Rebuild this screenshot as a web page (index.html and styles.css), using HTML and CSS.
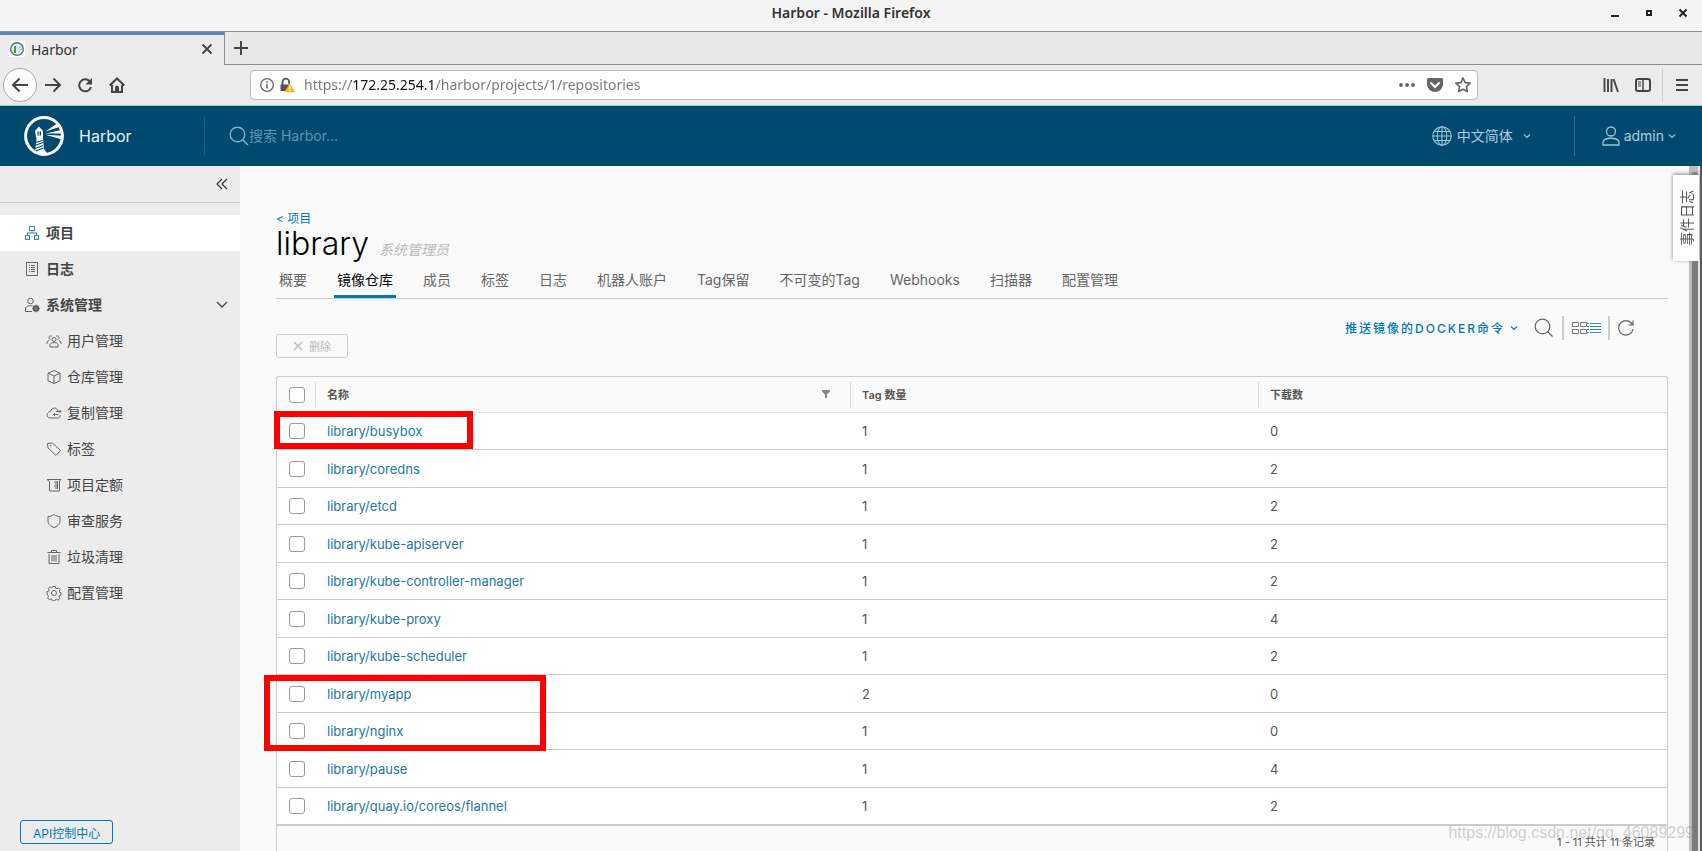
FILE: index.html
```html
<!DOCTYPE html>
<html lang="zh-CN">
<head>
<meta charset="utf-8">
<title>Harbor</title>
<link rel="stylesheet" href="styles.css">
</head>
<body>
<div class="titlebar">
  <span class="window-title">Harbor - Mozilla Firefox</span>
  <div class="window-buttons">
    <button aria-label="最小化"><svg width="10" height="10" viewBox="0 0 10 10"><path d="M1 8h8" stroke="#222" stroke-width="2"/></svg></button>
    <button aria-label="最大化"><svg width="10" height="10" viewBox="0 0 10 10"><path d="M3 3h4v4H3z" fill="none" stroke="#222" stroke-width="2"/></svg></button>
    <button aria-label="关闭"><svg width="10" height="10" viewBox="0 0 10 10"><path d="M1.5 1.5l7 7M8.500 1.500l-7 7" stroke="#222" stroke-width="2"/></svg></button>
  </div>
</div>
<div class="tabstrip">
  <div class="browser-tab">
    <svg class="favicon" width="16" height="16" viewBox="0 0 16 16"><path fill="#fff" d="M0 0h16v16H0z"/><circle cx="8" cy="8" r="6.300" fill="#eef6f8" stroke="#5d6d75" stroke-width="1.400"/><path d="M8 8l5-4v2zM8.500 8.500l5-1v1.500z" fill="#7fb9d3"/><path d="M5 5h2v7H5z" fill="#57924a"/><path d="M8 10h4l-3 2z" fill="#b9d9a9"/></svg>
    <span class="browser-tab-title">Harbor</span>
    <button aria-label="关闭标签页"><svg width="12" height="12" viewBox="0 0 12 12"><path d="M1.500 1.500l9 9M10.500 1.500l-9 9" stroke="#444" stroke-width="1.800"/></svg></button>
  </div>
  <button class="new-tab" aria-label="新建标签页"><svg width="16" height="16" viewBox="0 0 16 16"><path d="M8 1v14M1 8h14" stroke="#444" stroke-width="2"/></svg></button>
</div>
<div class="toolbar">
  <button class="back" aria-label="后退"><svg width="18" height="16" viewBox="0 0 18 16"><path d="M17 8H2M8.500 1.500L2 8l6.500 6.500" fill="none" stroke="#444" stroke-width="2"/></svg></button>
  <button class="tool" aria-label="前进"><svg width="18" height="16" viewBox="0 0 18 16"><path d="M1 8h15M9.500 1.500L16 8l-6.500 6.500" fill="none" stroke="#444" stroke-width="2"/></svg></button>
  <button class="tool" aria-label="刷新"><svg width="16" height="16" viewBox="0 0 16 16"><path d="M12.600 4.200A6 6 0 1 0 14 10" fill="none" stroke="#444" stroke-width="2"/><path d="M15 1v6.500H8.500z" fill="#444"/></svg></button>
  <button class="tool" aria-label="主页"><svg width="16" height="16" viewBox="0 0 16 16"><path d="M.7 8.500L8 1.500l7.300 7" fill="none" stroke="#444" stroke-width="2"/><path d="M3 8v7h10V8" fill="none" stroke="#444" stroke-width="2"/><path d="M6 15v-4.500c0-2.500 4-2.500 4 0V15z" fill="#444"/></svg></button>
  <div class="urlbar">
    <svg width="14" height="14" viewBox="0 0 14 14"><circle cx="7" cy="7" r="6.300" fill="none" stroke="#666" stroke-width="1.300"/><path d="M7 6v4.500M7 3.200v1.600" stroke="#666" stroke-width="1.600"/></svg>
    <svg width="15" height="16" viewBox="0 0 15 16"><path d="M2.500 8V5a3.300 3.300 0 0 1 6.600 0v2" fill="none" stroke="#555" stroke-width="1.800"/><path d="M.5 7.500h9V14h-9z" fill="#555"/><path d="M9.700 6L15 15.300H4.400z" fill="#f5b31d"/><path d="M9.700 9v3M9.700 12.800V14" stroke="#fff" stroke-width="1.400"/></svg>
    <input class="url" type="text" aria-label="地址" value="https://172.25.254.1/harbor/projects/1/repositories">
    <svg width="16" height="16" viewBox="0 0 16 16" fill="#666"><circle cx="2" cy="8" r="1.900"/><circle cx="8" cy="8" r="1.900"/><circle cx="14" cy="8" r="1.900"/></svg>
    <svg width="16" height="16" viewBox="0 0 16 16"><path d="M1.500 1h13c1 0 1.500.6 1.500 1.500V7a8 8 0 0 1-16 0V2.500C0 1.600.6 1 1.500 1z" fill="#666"/><path d="M4 6l4 4 4-4" fill="none" stroke="#fff" stroke-width="2" stroke-linecap="round"/></svg>
    <svg width="16" height="16" viewBox="0 0 16 16"><path d="M8 1l2.100 4.600 5 .6-3.700 3.400 1 5L8 12.200l-4.400 2.400 1-5L.9 6.200l5-.6z" fill="none" stroke="#666" stroke-width="1.700" stroke-linejoin="round"/></svg>
  </div>
  <div class="toolbar-end">
    <button aria-label="书库"><svg width="16" height="16" viewBox="0 0 16 16"><path d="M1.500 1v14M5 2v13M8.500 2v13M10.500 2L15 15" stroke="#444" stroke-width="1.900"/></svg></button>
    <button aria-label="侧栏"><svg width="16" height="16" viewBox="0 0 16 16"><rect x="1" y="2" width="14" height="12" rx="2" fill="none" stroke="#444" stroke-width="2"/><path d="M8 2v12" stroke="#444" stroke-width="1.500"/><path d="M3 5h3M3 7h3M3 9h3" stroke="#444"/></svg></button>
    <button class="menu" aria-label="菜单"><svg width="12" height="16" viewBox="0 0 12 16"><path d="M0 3h12M0 8h12M0 13h12" stroke="#444" stroke-width="1.900"/></svg></button>
  </div>
</div>
<header class="header">
  <a class="brand" href="#">
    <svg width="40" height="40" viewBox="0 0 40 40"><circle cx="20" cy="20" r="18.400" fill="none" stroke="#fff" stroke-width="3"/><path d="M11 15l4-4.500 4 4.500v8l1 10 3 4-6 1-6-3 1.500-12z" fill="#fff"/><path d="M13.500 15.500h3.500v4h-3.500z" fill="#004a70"/><path d="M15.200 15.500v4" stroke="#fff"/><path d="M11.500 26.500l7-2M11 29.500l8-3M11 32.500l8-3M11.500 35l8-3" stroke="#004a70" stroke-width="1.100"/><path d="M21.500 15.500L33 7.500l3 3.300zM21.500 17.500l15.500-3.500 1 3.500zM21.500 18.800l16.500 1-1 3.500z" fill="#fff"/></svg>
    <span>Harbor</span>
  </a>
  <label class="search">
    <svg width="20" height="20" viewBox="0 0 20 20"><circle cx="8.500" cy="8.500" r="7.300" fill="none" stroke="#7fb0cb" stroke-width="1.400"/><path d="M13.500 13.500l5.500 5.500" stroke="#7fb0cb" stroke-width="1.500"/></svg>
    <input type="text" placeholder="搜索 Harbor..." aria-label="搜索 Harbor">
  </label>
  <button class="language">
    <svg width="20" height="20" viewBox="0 0 20 20" fill="none" stroke="#9dc4d9" stroke-width="1.100"><circle cx="10" cy="10" r="9.200"/><ellipse cx="10" cy="10" rx="4.800" ry="9.200"/><path d="M10 1v18M1 10h18M2.500 5.500h15M2.500 14.500h15"/></svg>
    <span>中文简体</span>
    <svg class="caret" width="8" height="8" viewBox="0 0 8 8"><path d="M1 2.500l3 3 3-3" fill="none" stroke="#9dc4d9" stroke-width="1.200"/></svg>
  </button>
  <button class="user">
    <svg width="18" height="20" viewBox="0 0 18 20" fill="none" stroke="#9dc4d9" stroke-width="1.300"><circle cx="9" cy="5.500" r="4.500"/><path d="M1 19v-3c1.500-5 14.500-5 16 0v3z"/></svg>
    <span>admin</span>
    <svg width="8" height="8" viewBox="0 0 8 8"><path d="M1 2.500l3 3 3-3" fill="none" stroke="#9dc4d9" stroke-width="1.200"/></svg>
  </button>
</header>
<div class="workspace">
  <aside class="sidebar">
    <div class="collapse"><button aria-label="收起"><svg width="12" height="12" viewBox="0 0 12 12"><path d="M6 1L1 6l5 5M11 1L6 6l5 5" fill="none" stroke="#333" stroke-width="1.200"/></svg></button></div>
    <nav class="nav">
      <a class="nav-item active" href="#"><svg width="16" height="16" viewBox="0 0 16 16" fill="none" stroke="#3585ad" stroke-width="1.100"><path d="M5.500 1.500h5v4h-5zM1.500 10.500h4v4h-4zM10.500 10.500h4v4h-4zM8 5.500V8M3.500 10V8h9v2"/></svg><span>项目</span></a>
      <a class="nav-item" href="#"><svg width="16" height="16" viewBox="0 0 16 16" fill="none" stroke="#666"><path d="M2.500 1.500h11v13h-11zM5 4.500h1M7 4.500h4M5 6.500h1M7 6.500h4M5 8.500h1M7 8.500h4M5 10.500h1M7 10.500h4"/></svg><span>日志</span></a>
      <a class="nav-item" href="#"><svg width="16" height="16" viewBox="0 0 16 16" fill="none" stroke="#666"><circle cx="6.500" cy="4" r="2.800"/><path d="M8 14.500H1.500V11c1-2 4-3 7-2"/><circle cx="12" cy="11.500" r="2.300" stroke="#555" stroke-width="2"/><path d="M12 7.500v8M8 11.500h8M9.300 8.800l5.400 5.400M14.700 8.800l-5.400 5.400" stroke-width=".8"/></svg><span>系统管理</span><svg class="chevron" width="12" height="12" viewBox="0 0 12 12"><path d="M1 3l5 5 5-5" fill="none" stroke="#444" stroke-width="1.300"/></svg></a>
      <a class="nav-item child" href="#"><svg width="16" height="16" viewBox="0 0 16 16" fill="none" stroke="#666"><circle cx="8" cy="6.500" r="2"/><path d="M4 14v-2.500c1-2.500 7-2.500 8 0V14zM4.500 6.500A1.800 1.800 0 1 1 6 3.500M11.500 6.500A1.800 1.800 0 1 0 10 3.500M1 11V9l2-1.500M15 11V9l-2-1.500"/></svg><span>用户管理</span></a>
      <a class="nav-item child" href="#"><svg width="16" height="16" viewBox="0 0 16 16" fill="none" stroke="#666"><path d="M8 1.500l6 2.700v7.600l-6 2.700-6-2.700V4.200zM2 4.200L8 7l6-2.800M8 7v7.500"/></svg><span>仓库管理</span></a>
      <a class="nav-item child" href="#"><svg width="16" height="16" viewBox="0 0 16 16" fill="none" stroke="#666"><path d="M12 6C11 2 5.500 2 4.800 6.500 0 7 .2 13 4 13h7.500c2 0 3-1.500 2.500-3M10 6.500h5M13.500 5L15 6.500 13.500 8M12.500 9.500h-5M9 8L7.500 9.500 9 11"/></svg><span>复制管理</span></a>
      <a class="nav-item child" href="#"><svg width="16" height="16" viewBox="0 0 16 16" fill="none" stroke="#666"><path d="M1.500 2.500l5-.5 8 7.500-4.500 5-8-7.500zM4.500 4.500h.6v.6h-.6z"/></svg><span>标签</span></a>
      <a class="nav-item child" href="#"><svg width="16" height="16" viewBox="0 0 16 16" fill="none" stroke="#666"><path d="M1 2.500h14L13.500 4v10h-10V4.500zM8 5h3M9 7h2M8 9h3M9 11h2M11.500 4v8"/></svg><span>项目定额</span></a>
      <a class="nav-item child" href="#"><svg width="16" height="16" viewBox="0 0 16 16" fill="none" stroke="#666"><path d="M8 1.500c2 1.500 4 2 6 2V8c0 3.500-3 5.500-6 6.500C5 13.500 2 11.500 2 8V3.500c2 0 4-.5 6-2z"/></svg><span>审查服务</span></a>
      <a class="nav-item child" href="#"><svg width="16" height="16" viewBox="0 0 16 16" fill="none" stroke="#666"><path d="M1.500 3.500h13M5.500 3.500v-2h5v2M3 5v9.500h10V5M6 6v6.500M8 6v6.500M10 6v6.500"/></svg><span>垃圾清理</span></a>
      <a class="nav-item child" href="#"><svg width="16" height="16" viewBox="0 0 16 16" fill="none" stroke="#666"><path d="M6.700 1.500h2.600l.4 1.700 1.300.5 1.500-.9 1.700 1.800-.9 1.500.5 1.300 1.200.3v2.600l-1.500.4-.6 1.300.9 1.500-1.800 1.700-1.500-.9-1.300.5-.3 1.200H6.500l-.4-1.500-1.300-.6-1.500.9-1.700-1.800.9-1.500-.5-1.300L1 9.300V6.700l1.500-.4.6-1.300-.9-1.500L4 1.800l1.500.9 1-.4z"/><circle cx="8" cy="8" r="2.500"/></svg><span>配置管理</span></a>
    </nav>
    <button class="api">API控制中心</button>
  </aside>
  <main class="main">
    <a class="back-link" href="#">&lt; 项目</a>
    <div class="heading"><h1>library</h1><em>系统管理员</em></div>
    <nav class="tabs">
      <a href="#">概要</a><a class="selected" href="#">镜像仓库</a><a href="#">成员</a><a href="#">标签</a><a href="#">日志</a><a href="#">机器人账户</a><a href="#">Tag保留</a><a href="#">不可变的Tag</a><a href="#">Webhooks</a><a href="#">扫描器</a><a href="#">配置管理</a>
    </nav>
    <div class="actions">
      <button class="docker">推送镜像的DOCKER命令<svg width="8" height="8" viewBox="0 0 8 8"><path d="M1 2.500l3 3 3-3" fill="none" stroke="#0079b8" stroke-width="1.200"/></svg></button>
      <button aria-label="搜索"><svg width="20" height="20" viewBox="0 0 20 20"><circle cx="8.500" cy="8.500" r="7.300" fill="none" stroke="#666" stroke-width="1.200"/><path d="M13.500 13.500l5 5" stroke="#666" stroke-width="1.300"/></svg></button>
      <div class="views">
        <button aria-label="卡片"><svg width="16" height="12" viewBox="0 0 16 12"><path d="M1.500.5h6v4h-6zM9.500.5h6v4h-6zM1.500 7.500h6v4h-6zM9.500 7.500h6v4h-6z" fill="none" stroke="#777"/></svg></button>
        <button aria-label="列表"><svg width="14" height="12" viewBox="0 0 14 12"><path d="M0 1.500h2M3 1.500h11M0 4.500h2M3 4.500h11M0 7.500h2M3 7.500h11M0 10.500h2M3 10.500h11" stroke="#2f8fc4"/></svg></button>
      </div>
      <button aria-label="刷新"><svg width="16" height="16" viewBox="0 0 16 16"><path d="M14.500 5A7.200 7.200 0 1 0 15 9M15 .5V5h-4.500" fill="none" stroke="#666" stroke-width="1.200"/></svg></button>
    </div>
    <button class="delete" disabled><svg width="10" height="10" viewBox="0 0 10 10"><path d="M1 1l8 8M9 1L1 9" stroke="#bbb" stroke-width="1.300"/></svg>删除</button>
    <div class="grid">
      <table>
        <colgroup><col class="col-check"><col class="col-name"><col class="col-tags"><col></colgroup>
        <thead><tr>
          <th><input type="checkbox" aria-label="全选"></th>
          <th><div class="th">名称<button aria-label="筛选"><svg width="8" height="8" viewBox="0 0 8 8"><path d="M0 0h8v1.500L5 4.500V8H3V4.500L0 1.500z" fill="#888"/></svg></button></div></th>
          <th><div class="th">Tag 数量</div></th>
          <th><div class="th">下载数</div></th>
        </tr></thead>
        <tbody>
          <tr><td><input type="checkbox" aria-label="library/busybox"></td><td><a href="#">library/busybox</a></td><td>1</td><td>0</td></tr>
          <tr><td><input type="checkbox" aria-label="library/coredns"></td><td><a href="#">library/coredns</a></td><td>1</td><td>2</td></tr>
          <tr><td><input type="checkbox" aria-label="library/etcd"></td><td><a href="#">library/etcd</a></td><td>1</td><td>2</td></tr>
          <tr><td><input type="checkbox" aria-label="library/kube-apiserver"></td><td><a href="#">library/kube-apiserver</a></td><td>1</td><td>2</td></tr>
          <tr><td><input type="checkbox" aria-label="library/kube-controller-manager"></td><td><a href="#">library/kube-controller-manager</a></td><td>1</td><td>2</td></tr>
          <tr><td><input type="checkbox" aria-label="library/kube-proxy"></td><td><a href="#">library/kube-proxy</a></td><td>1</td><td>4</td></tr>
          <tr><td><input type="checkbox" aria-label="library/kube-scheduler"></td><td><a href="#">library/kube-scheduler</a></td><td>1</td><td>2</td></tr>
          <tr><td><input type="checkbox" aria-label="library/myapp"></td><td><a href="#">library/myapp</a></td><td>2</td><td>0</td></tr>
          <tr><td><input type="checkbox" aria-label="library/nginx"></td><td><a href="#">library/nginx</a></td><td>1</td><td>0</td></tr>
          <tr><td><input type="checkbox" aria-label="library/pause"></td><td><a href="#">library/pause</a></td><td>1</td><td>4</td></tr>
          <tr><td><input type="checkbox" aria-label="library/quay.io/coreos/flannel"></td><td><a href="#">library/quay.io/coreos/flannel</a></td><td>1</td><td>2</td></tr>
        </tbody>
      </table>
      <div class="grid-footer">1 - 11 共计 11 条记录</div>
      <div class="mark mark-one"></div>
      <div class="mark mark-two"></div>
    </div>
  </main>
  <div class="scrollbar"><div class="thumb"></div></div>
  <button class="events">事件日志</button>
</div>
<div class="watermark">https://blog.csdn.net/qq_46089299</div>
</body>
</html>
```
FILE: styles.css
```css
* { box-sizing: border-box; }
body {
  margin: 0;
  height: 100vh;
  display: flex;
  flex-direction: column;
  position: relative;
  overflow: hidden;
  font-family: Inter, "Noto Sans CJK SC", sans-serif;
  font-size: 14px;
  color: #565656;
  background: #fafafa;
}
button {
  display: flex;
  align-items: center;
  justify-content: center;
  padding: 0;
  border: 0;
  background: none;
  font: inherit;
  color: inherit;
}
a { text-decoration: none; color: inherit; }
svg { flex: none; display: block; }

.titlebar {
  flex: none;
  display: grid;
  grid-template-columns: 1fr auto 1fr;
  height: 32px;
  padding: 0 14px 6px;
  align-items: center;
  background: #f4f4f4;
  border-bottom: 1px solid #8f8f8f;
  font-family: "Noto Sans", sans-serif;
}
.window-title { grid-column: 2; font-weight: 600; font-size: 14px; color: #333; }
.window-buttons { display: flex; justify-content: flex-end; gap: 24px; }

.tabstrip { flex: none; display: flex; height: 33px; background: #e8e8e8; font-family: "Noto Sans", sans-serif; }
.browser-tab {
  display: flex;
  align-items: center;
  gap: 6px;
  width: 225px;
  padding: 0 11px 2px 9px;
  border-top: 3px solid #5a87b8;
  border-right: 1px solid #8f8f8f;
  background: #ebebeb;
}
.browser-tab-title { flex: 1; color: #333; }
.new-tab { flex: 1; justify-content: flex-start; padding-left: 8px; border-bottom: 1px solid #8f8f8f; }

.toolbar {
  flex: none;
  display: flex;
  align-items: center;
  height: 41px;
  padding: 0 14px 0 3px;
  background: #ebebeb;
  border-bottom: 1px solid #b8c4cc;
}
.back { width: 34px; height: 34px; border: 1px solid #aaa; border-radius: 50%; background: #fbfbfb; }
.tool { width: 32px; height: 32px; }
.urlbar {
  flex: 1;
  display: flex;
  align-items: center;
  gap: 12px;
  height: 30px;
  margin: 0 125px 0 117px;
  padding: 0 6px 0 9px;
  border: 1px solid #b9b9b9;
  border-radius: 4px;
  background: #fff;
}
.urlbar svg:first-child { margin-right: -6px; }
.urlbar .url {
  flex: 1;
  min-width: 0;
  margin-left: -3px;
  padding: 0;
  border: 0;
  font: 14px/20px "Noto Sans", sans-serif;
  color: transparent;
  background: linear-gradient(90deg, #777 47px, #111 47px, #111 132px, #777 132px);
  -webkit-background-clip: text;
  background-clip: text;
}
.toolbar-end { display: flex; align-items: center; gap: 16px; }
.menu { height: 34px; padding-left: 13px; margin-left: -5px; border-left: 1px solid #d0d0d0; }

.header {
  flex: none;
  display: flex;
  align-items: center;
  height: 60px;
  padding: 0 26px 0 24px;
  background: #004a70;
  color: #a9cde0;
}
.brand { display: flex; align-items: center; gap: 15px; width: 180px; font-size: 16px; color: #e6f1f7; }
.search { flex: 1; display: flex; align-items: center; height: 40px; padding-left: 24px; border-left: 1px solid #1e5f82; }
.search input { flex: 1; padding: 0 0 2px; border: 0; outline: 0; background: none; font: inherit; color: #fff; }
.search input::placeholder { color: #5d94b2; }
.language { gap: 5px; padding-right: 43px; }
.language span, .user span { padding-bottom: 2px; }
.language .caret { margin-left: 5px; }
.user { gap: 4px; height: 40px; padding-left: 27px; border-left: 1px solid #2d6b8c; }

.workspace { flex: 1; min-height: 0; display: flex; position: relative; }
.sidebar { flex: none; display: flex; flex-direction: column; width: 240px; background: #ececec; }
.collapse { display: flex; justify-content: flex-end; align-items: center; height: 37px; padding-right: 12px; border-bottom: 1px solid #ccc; }
.nav { flex: 1; padding-top: 12px; }
.nav-item { display: flex; align-items: center; gap: 6px; height: 36px; padding: 0 12px 0 24px; font-weight: 700; color: #454545; }
.nav-item span { padding-bottom: 2px; }
.nav-item.active { background: #fff; }
.nav-item.child { padding-left: 46px; gap: 5px; font-weight: 400; }
.chevron { margin-left: auto; }
.api { align-self: flex-start; height: 24px; margin: 0 0 7px 20px; padding: 0 12px; border: 1px solid #0079b8; border-radius: 3px; font-size: 12px; color: #0079b8; }

.main { flex: 1; min-width: 0; padding: 44px 21px 0 36px; overflow: hidden; }
.back-link { display: block; font-size: 12px; line-height: 18px; color: #0079b8; }
.heading { display: flex; align-items: baseline; gap: 10px; line-height: 32px; }
.heading h1 { margin: 0; font-size: 32px; font-weight: 300; color: #000; }
.heading em { color: #bbb; }
.tabs { display: flex; gap: 24px; height: 38px; border-bottom: 1px solid #ccc; margin-top: -5px; }
.tabs a { padding: 0 3px; line-height: 38px; color: #666; }
.tabs .selected { color: #000; box-shadow: inset 0 -3px #0079b8; }
.actions { display: flex; justify-content: flex-end; align-items: center; gap: 8px; height: 35px; padding: 0 34px 0 0; margin-top: 11px; }
.docker { gap: 5px; margin-right: 8px; font-size: 12px; font-weight: 500; letter-spacing: 2px; color: #0079b8; }
.views { display: flex; align-items: center; height: 24px; padding: 0 7px; border: 2px solid #ccc; border-width: 0 2px; }
.delete { gap: 6px; width: 72px; height: 24px; margin: -11px 0 18px; border: 1px solid #ccc; border-radius: 3px; font-size: 11px; color: #bbb; }

.grid { position: relative; border: 1px solid #ccc; border-bottom: 0; border-radius: 3px 3px 0 0; }
table { width: 100%; table-layout: fixed; border-collapse: separate; border-spacing: 0; }
.col-check { width: 38px; }
.col-name { width: 535px; }
.col-tags { width: 408px; }
th, td { height: 37px; padding: 0; text-align: left; }
tr > :first-child { padding-left: 12px; }
th { height: 36px; font-size: 11px; font-weight: 600; border-bottom: 1px solid #ddd; }
.th { display: flex; align-items: center; justify-content: space-between; height: 26px; padding: 0 20px 2px 11px; border-left: 1px solid #ddd; }
td { font-size: 13px; background: #fff; border-bottom: 1px solid #ccc; }
td + td { padding-left: 12px; }
tbody tr:nth-child(even) td { height: 38px; }
td a { color: #2477a3; }
input[type="checkbox"] { display: block; appearance: none; width: 16px; height: 16px; margin: 0; border: 1px solid #9a9a9a; border-radius: 3px; background: #fff; }
.grid-footer { padding: 7px 12px; border-top: 1px solid #ccc; font-size: 11px; line-height: 18px; text-align: right; }
.mark { position: absolute; border: 6px solid #f00; }
.mark-one { left: -3px; top: 34px; width: 199px; height: 38px; }
.mark-two { left: -13px; top: 298px; width: 282px; height: 76px; }

.scrollbar { flex: none; width: 13px; padding: 6px 4px 0 3px; background: linear-gradient(90deg, #bdbdbd 9px, #e6e6e6 9px, #e6e6e6 11px, #555 11px); }
.thumb { height: 100%; border-radius: 3px 3px 0 0; background: #7a7c7b; }
.events { position: absolute; right: 3px; top: 9px; width: 26px; height: 86px; background: #fff; box-shadow: 0 1px 4px #888; writing-mode: vertical-rl; text-orientation: sideways; transform: rotate(180deg); }
.watermark { position: absolute; right: 8px; bottom: 8px; font: 16px/20px "Liberation Sans", sans-serif; color: rgba(150, 150, 150, .45); }
```
